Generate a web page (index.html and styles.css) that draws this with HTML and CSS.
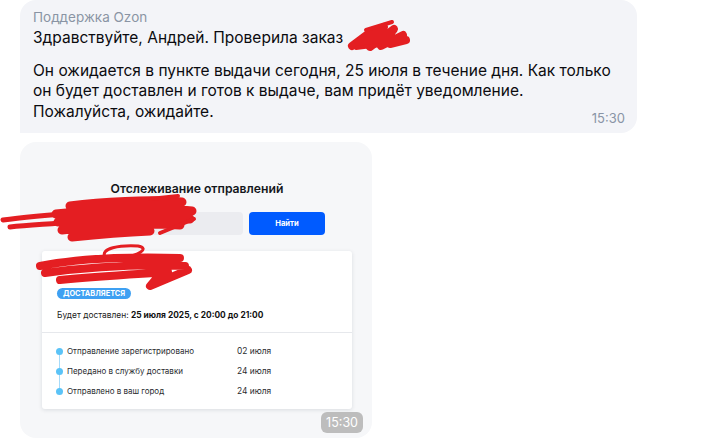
FILE: index.html
```html
<!DOCTYPE html>
<html lang="ru">
<head>
<meta charset="utf-8">
<link rel="stylesheet" href="styles.css">
</head>
<body>
<div class="chat">
  <div class="msg msg-text">
    <div class="author">Поддержка Ozon</div>
    <p class="line">Здравствуйте, Андрей. Проверила заказ&nbsp;&nbsp;&nbsp;&nbsp;&nbsp;&nbsp;&nbsp;&nbsp;&nbsp;&nbsp;.</p>
    <p class="para">Он ожидается в пункте выдачи сегодня, 25 июля в течение дня. Как только<br>он будет доставлен и готов к выдаче, вам придёт уведомление.<br>Пожалуйста, ожидайте.</p>
    <div class="time">15:30</div>
  </div>

  <div class="msg msg-shot">
    <div class="shot">
      <div class="shot-title">Отслеживание отправлений</div>
      <div class="search">
        <div class="search-input"></div>
        <div class="search-btn">Найти</div>
      </div>
      <div class="card">
        <div class="card-head">
          <div class="track-no"></div>
          <span class="status">Доставляется</span>
          <div class="eta">Будет доставлен: <b>25 июля 2025, с 20:00 до 21:00</b></div>
        </div>
        <ul class="timeline">
          <li class="step"><span class="dot"></span><span class="step-name">Отправление зарегистрировано</span><span class="step-date">02 июля</span></li>
          <li class="step"><span class="dot"></span><span class="step-name">Передано в службу доставки</span><span class="step-date">24 июля</span></li>
          <li class="step"><span class="dot"></span><span class="step-name">Отправлено в ваш город</span><span class="step-date">24 июля</span></li>
        </ul>
      </div>
    </div>
    <div class="shot-foot"><span class="time-badge">15:30</span></div>
  </div>
</div>

<svg class="redact" width="706" height="444" viewBox="0 0 706 444" fill="none" stroke="#e41e22" stroke-linecap="round" stroke-linejoin="round">
  <path stroke-width="8" d="M352 46 L372 31 L360 45 L384 27 L370 47 L394 29 L381 46 L403 35 L390 44 L406 40"/>
  <path stroke-width="4" d="M366 30 L392 22 M356 48 L380 45"/>
  <path stroke-width="5" d="M3 220 C30 216 60 214 100 211 M10 227 C30 225 50 224 72 222"/>
  <path stroke-width="9" d="M70 206 C100 202 150 199 182 202 M56 214 C100 209 150 206 192 211 M58 222 C100 218 150 214 190 219 M62 230 C100 226 140 222 180 225 M72 237 C100 234 125 232 150 231"/>
  <path stroke-width="4" d="M150 199 L178 196 M160 233 L194 219"/>
  <path stroke-width="8" d="M40 266 C70 260 110 256 180 258 M45 273 C90 267 140 264 185 266 M60 280 C100 276 140 274 168 272 M170 262 L150 286 L188 270"/>
  <path stroke-width="3" d="M105 257 C100 248 120 245 138 246 C150 248 140 256 118 258"/>
</svg>
</body>
</html>
```

FILE: styles.css
```css
* { box-sizing: border-box; }
html, body { margin: 0; padding: 0; background: #fff; }
body {
  font-family: Inter, "Noto Sans", sans-serif;
  color: #111;
  position: relative;
  width: 706px;
  height: 444px;
  overflow: hidden;
}
.chat {
  display: flex;
  flex-direction: column;
  align-items: flex-start;
  gap: 9px;
  padding-left: 20px;
}
.msg-text {
  width: 617px;
  background: #f3f4f8;
  border-radius: 16px 16px 16px 0;
  padding: 8px 12px 8px 13px;
}
.author {
  font-size: 13.5px;
  line-height: 18px;
  color: #8a94a4;
  margin-bottom: 2px;
}
.line, .para {
  margin: 0;
  font-size: 15.5px;
  line-height: 20.5px;
  color: #0b0b0f;
}
.para { margin-top: 12px; }
.time {
  text-align: right;
  font-size: 13px;
  line-height: 14px;
  color: #8a94a6;
  margin-top: -11px;
}
.msg-shot {
  width: 352px;
  background: #f6f7f9;
  border-radius: 16px;
  padding: 39px 9px 5px 22px;
}
.shot {
  display: flex;
  flex-direction: column;
  align-items: stretch;
  width: 310px;
}
.shot-title {
  text-align: center;
  font-size: 12.2px;
  line-height: 16px;
  font-weight: 600;
  color: #15171c;
}
.search {
  display: flex;
  gap: 6px;
  margin: 15px 27px 0 27px;
  height: 23px;
}
.search-input {
  flex: 1;
  background: #ebecf0;
  border-radius: 4px;
}
.search-btn {
  width: 76px;
  background: #005bff;
  border-radius: 4px;
  color: #fff;
  font-size: 7.6px;
  font-weight: 700;
  display: flex;
  align-items: center;
  justify-content: center;
}
.card {
  margin-top: 16px;
  background: #fff;
  border-radius: 3px;
  box-shadow: 0 1px 4px rgba(20, 30, 50, 0.12);
  height: 158px;
}
.card-head {
  padding: 14px 15px 10px 15px;
  border-bottom: 1px solid #e6e8ec;
}
.track-no { height: 16px; }
.status {
  display: inline-block;
  margin-top: 7px;
  height: 11px;
  line-height: 11px;
  padding: 0 6px;
  border-radius: 6px;
  background: #3ea0f2;
  color: #fff;
  font-size: 7.4px;
  font-weight: 700;
  text-transform: uppercase;
  vertical-align: top;
}
.eta {
  margin-top: 7px;
  font-size: 8.4px;
  line-height: 14px;
  color: #222;
}
.eta b { font-weight: 700; color: #111; }
.timeline {
  list-style: none;
  margin: 0;
  padding: 8px 15px 0 14px;
  position: relative;
}
.timeline::before {
  content: "";
  position: absolute;
  left: 17px;
  top: 18px;
  height: 40px;
  width: 1px;
  background: #a6dbfa;
}
.step {
  display: flex;
  align-items: center;
  height: 20px;
  font-size: 8px;
  color: #2a2c30;
}
.dot {
  width: 7px;
  height: 7px;
  border-radius: 50%;
  background: #5bc3f7;
  margin-right: 4px;
  position: relative;
}
.step-name { width: 170px; }
.step-date { font-size: 8.4px; }
.shot-foot {
  display: flex;
  justify-content: flex-end;
  margin-top: 3px;
}
.time-badge {
  background: #bdbdbd;
  color: #fff;
  border-radius: 6px;
  font-size: 12.5px;
  line-height: 21px;
  height: 21px;
  padding: 0 5px;
}
.redact {
  position: absolute;
  left: 0;
  top: 0;
  pointer-events: none;
}
```
